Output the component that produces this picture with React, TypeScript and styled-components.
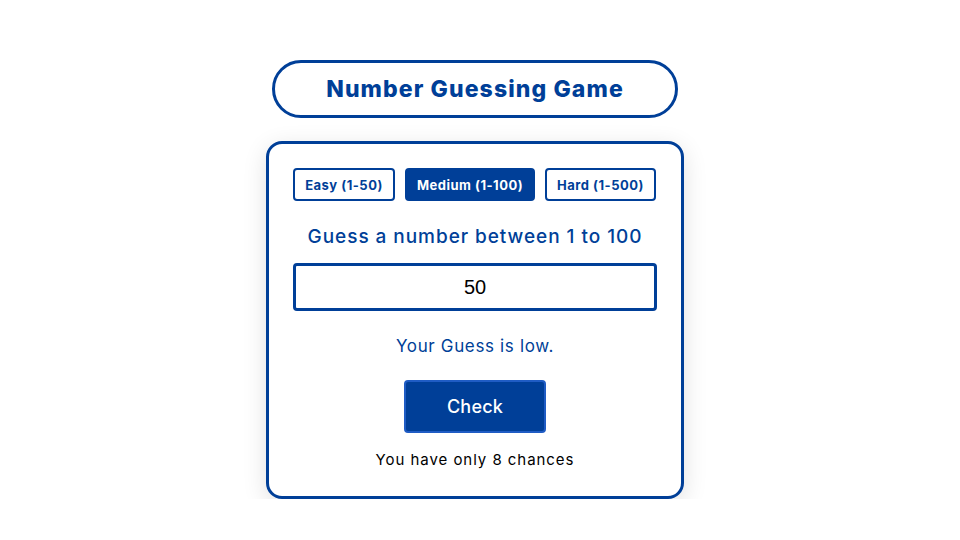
import styled, { createGlobalStyle } from "styled-components";

const blue = "#003f98";

const GlobalStyle = createGlobalStyle`
  * {
    box-sizing: border-box;
  }
  body {
    margin: 0;
    background: #ffffff;
    font-family: Inter, "Open Sans", "Liberation Sans", sans-serif;
  }
  input::-webkit-outer-spin-button,
  input::-webkit-inner-spin-button {
    -webkit-appearance: none;
    margin: 0;
  }
`;

const Page = styled.div`
  width: 950px;
  display: flex;
  flex-direction: column;
  align-items: center;
  padding-top: 60px;
`;

const Title = styled.h1`
  margin: 0;
  width: 406px;
  height: 58px;
  border: 3px solid ${blue};
  border-radius: 29px;
  display: flex;
  align-items: center;
  justify-content: center;
  color: ${blue};
  font-size: 23px;
  font-weight: 800;
  letter-spacing: 1.1px;
`;

const Card = styled.div`
  margin-top: 23px;
  width: 418px;
  height: 358px;
  border: 3px solid ${blue};
  border-radius: 16px;
  padding: 24px 24px 0;
  box-shadow: 0 6px 24px rgba(0, 0, 0, 0.12);
  display: flex;
  flex-direction: column;
  align-items: center;
`;

const LevelRow = styled.div`
  display: flex;
  gap: 10px;
  width: 100%;
`;

const LevelButton = styled.button<{ $active?: boolean; $w: number }>`
  width: ${(p) => p.$w}px;
  height: 33px;
  border: 2px solid ${blue};
  border-radius: 4px;
  background: ${(p) => (p.$active ? blue : "#fff")};
  color: ${(p) => (p.$active ? "#fff" : blue)};
  font-family: inherit;
  font-size: 13px;
  font-weight: 700;
  letter-spacing: 0.5px;
  padding: 0;
`;

const Prompt = styled.h2`
  margin: 24px 0 0;
  height: 24px;
  line-height: 24px;
  color: ${blue};
  font-size: 19px;
  font-weight: 500;
  letter-spacing: 0.95px;
`;

const GuessInput = styled.input`
  margin-top: 14px;
  width: 100%;
  height: 48px;
  border: 3px solid ${blue};
  border-radius: 4px;
  text-align: center;
  font-family: "Liberation Sans", Arial, sans-serif;
  font-size: 20px;
  color: #000;
  outline: none;
  -moz-appearance: textfield;
`;

const Message = styled.p`
  margin: 24px 0 0;
  height: 22px;
  line-height: 22px;
  color: ${blue};
  font-size: 17px;
  letter-spacing: 0.65px;
`;

const CheckButton = styled.button`
  margin-top: 23px;
  width: 142px;
  height: 53px;
  background: ${blue};
  border: 2px solid #1f5cc4;
  border-radius: 4px;
  color: #fff;
  font-family: inherit;
  font-size: 18px;
  font-weight: 500;
  letter-spacing: 0.2px;
`;

const Chances = styled.p`
  margin: 17px 0 0;
  height: 20px;
  line-height: 20px;
  color: #000;
  font-size: 15px;
  letter-spacing: 0.95px;
`;

export default function App() {
  return (
    <>
      <GlobalStyle />
      <Page>
        <Title>Number Guessing Game</Title>
        <Card>
          <LevelRow>
            <LevelButton $w={102}>Easy (1-50)</LevelButton>
            <LevelButton $w={130} $active>
              Medium (1-100)
            </LevelButton>
            <LevelButton $w={111}>Hard (1-500)</LevelButton>
          </LevelRow>
          <Prompt>Guess a number between 1 to 100</Prompt>
          <GuessInput type="number" defaultValue={50} />
          <Message>Your Guess is low.</Message>
          <CheckButton>Check</CheckButton>
          <Chances>You have only 8 chances</Chances>
        </Card>
      </Page>
    </>
  );
}
